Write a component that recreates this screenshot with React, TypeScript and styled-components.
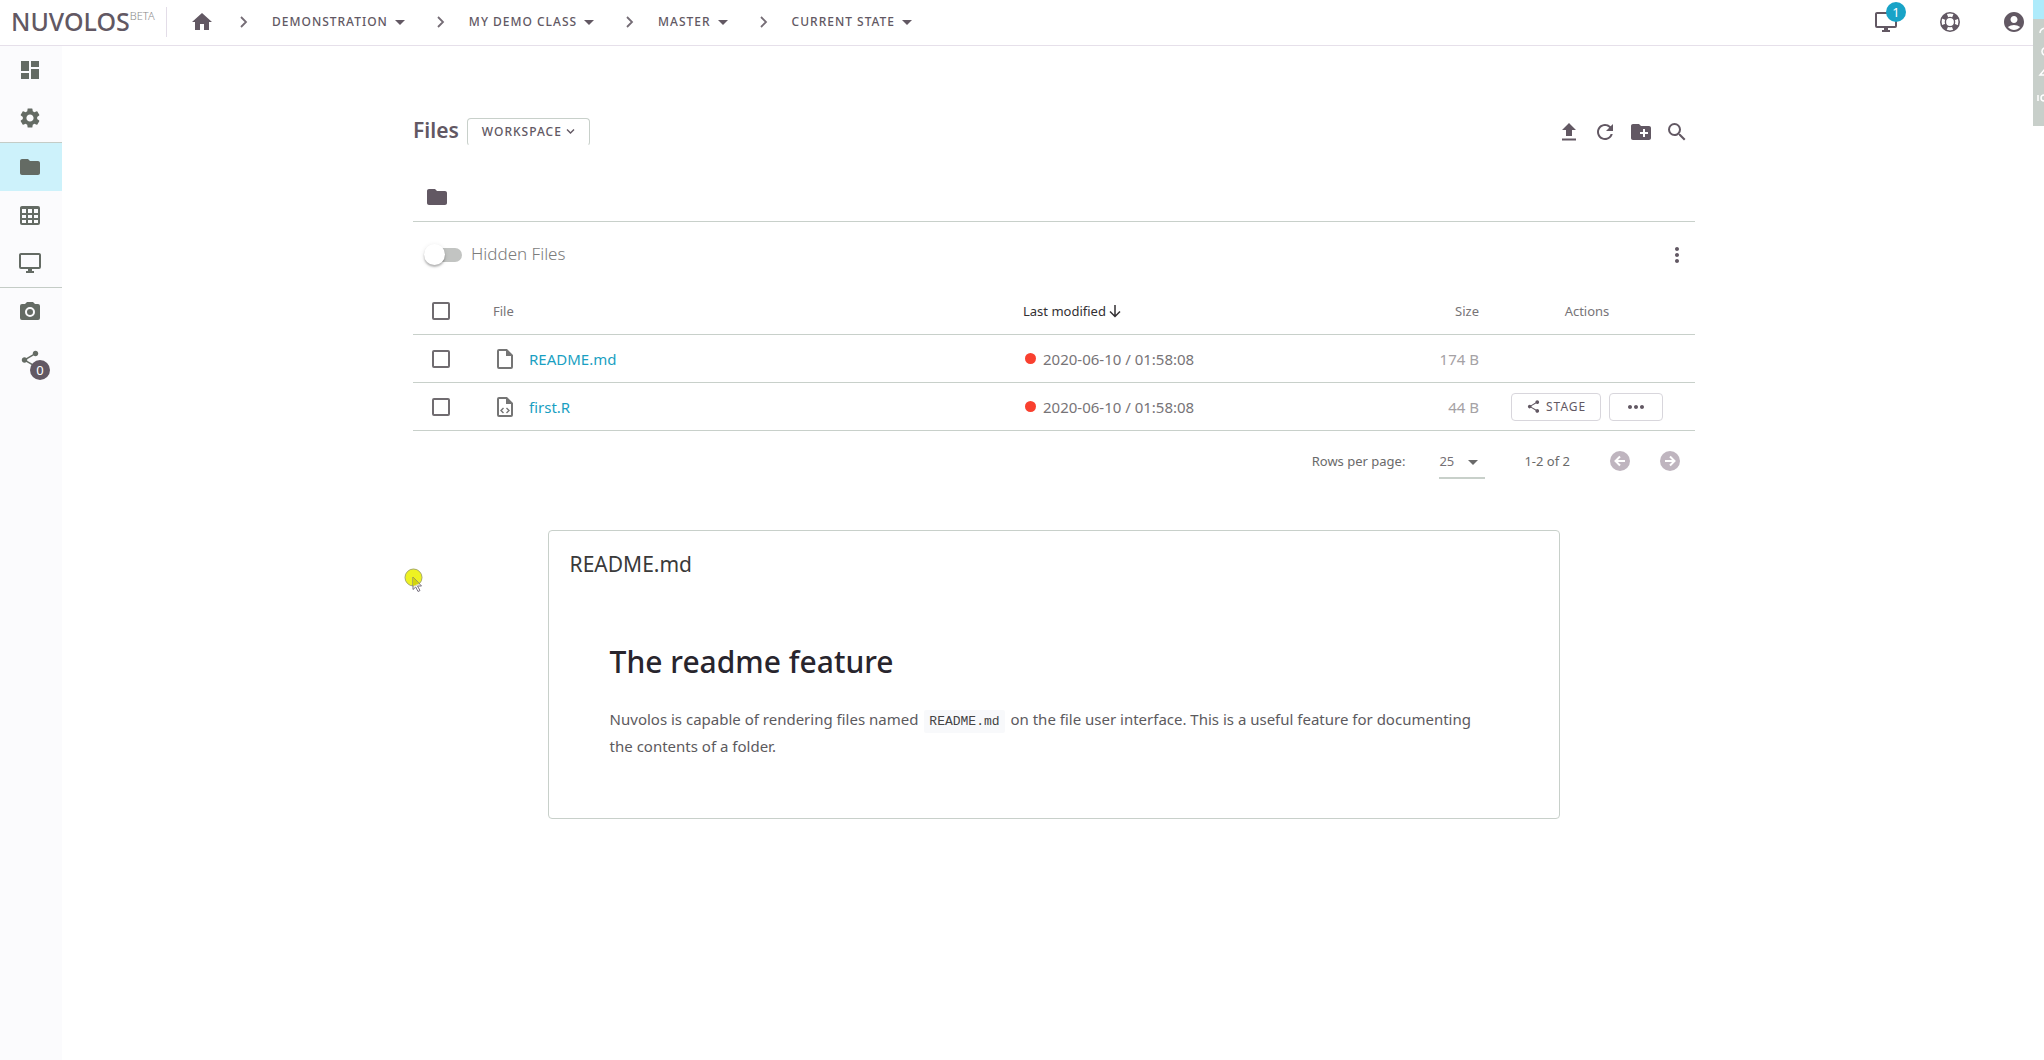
import React from "react";
import styled, { createGlobalStyle, css } from "styled-components";
import {
  MdAccountCircle,
  MdArrowDropDown,
  MdCreateNewFolder,
  MdDashboard,
  MdFolder,
  MdMoreHoriz,
  MdMoreVert,
  MdRefresh,
  MdSearch,
  MdSettings,
  MdShare,
} from "react-icons/md";

const ink = "#625863";
const side = "#646b64";
const line = "#c8d0ca";
const accent = "#1a9fc2";

const Global = createGlobalStyle`
  *, *::before, *::after { box-sizing: border-box; }
  body {
    margin: 0;
    background: #fff;
    color: #6a6a6a;
    font-family: "Noto Sans", "Open Sans", sans-serif;
    font-size: 15px;
  }
  button, select, input { font-family: inherit; margin: 0; }
  svg { display: block; flex: none; }
`;

const Page = styled.div`
  display: flex;
  flex-direction: column;
  min-height: 100vh;
  position: relative;
  overflow: hidden;
`;

const Header = styled.header`
  display: flex;
  align-items: center;
  height: 46px;
  padding: 0 18px 2px 11px;
  border-bottom: 1px solid #e6e0ea;
`;

const Logo = styled.a`
  display: flex;
  align-items: flex-start;
  width: 156px;
  height: 30px;
  color: ${ink};
  text-decoration: none;
  border-right: 1px solid #e3dde8;
`;

const LogoName = styled.span`
  font-size: 25px;
  line-height: 28px;
  font-weight: 500;
`;

const LogoTag = styled.span`
  margin-top: 1px;
  font-size: 11px;
  line-height: 16px;
  font-weight: 300;
  color: #8a8a8a;
`;

const Crumbs = styled.nav`
  display: flex;
  align-items: center;
  flex: 1;
  padding-left: 22px;
`;

const IconButton = styled.button<{ $size?: number; $color?: string }>`
  position: relative;
  display: flex;
  align-items: center;
  justify-content: center;
  width: ${(p) => p.$size ?? 36}px;
  height: ${(p) => p.$size ?? 36}px;
  padding: 0;
  border: 0;
  background: none;
  color: ${(p) => p.$color ?? ink};
`;

const Separator = styled.span`
  display: flex;
  justify-content: center;
  width: 24px;
  margin: 0 16px 0 17px;
  color: #746c75;
`;

const CrumbButton = styled.button`
  display: flex;
  align-items: center;
  height: 32px;
  padding: 0;
  border: 0;
  background: none;
  color: ${ink};
  font-size: 12px;
  font-weight: 500;
  letter-spacing: 1px;
`;

const HeaderActions = styled.div`
  display: flex;
  align-items: center;
  gap: 40px;
`;

const Badge = styled.span<{ $tone: string; $top: number; $left: number }>`
  position: absolute;
  top: ${(p) => p.$top}px;
  left: ${(p) => p.$left}px;
  width: 20px;
  height: 20px;
  border-radius: 50%;
  background: ${(p) => p.$tone};
  color: #fff;
  font-size: 13px;
  line-height: 20px;
  text-align: center;
`;

const Body = styled.div`
  display: flex;
  flex: 1;
`;

const Sidebar = styled.nav`
  display: flex;
  flex-direction: column;
  width: 62px;
  flex: none;
  background: #fbfbfd;
`;

const SideItem = styled.a<{ $active?: boolean; $ruled?: boolean }>`
  position: relative;
  display: flex;
  align-items: center;
  justify-content: center;
  height: ${(p) => (p.$ruled ? 49 : 48)}px;
  padding-right: 2px;
  color: ${side};
  ${(p) => p.$ruled && css`border-top: 1px solid #c4ccc6;`}
  ${(p) => p.$active && css`background: #cdf2fb;`}
`;

const Main = styled.main`
  flex: 1;
  min-width: 0;
  padding-left: 2px;
`;

const Content = styled.div`
  width: 100%;
  max-width: 1282px;
  margin: 0 auto;
  padding-top: 68px;
`;

const TitleBar = styled.div`
  display: flex;
  align-items: center;
  height: 36px;
`;

const Title = styled.h1`
  margin: 0 8px 4px 0;
  color: ${ink};
  font-size: 21px;
  line-height: 28px;
  font-weight: 600;
`;

const WorkspaceButton = styled.button`
  display: flex;
  align-items: center;
  gap: 4px;
  height: 28px;
  padding: 0 14px 2px;
  border: 1px solid ${line};
  border-bottom-color: transparent;
  border-radius: 4px;
  background: #fff;
  color: ${ink};
  font-size: 12px;
  font-weight: 500;
  letter-spacing: 1px;
`;

const Tools = styled.div`
  display: flex;
  margin-left: auto;
`;

const PathBar = styled.div`
  display: flex;
  align-items: center;
  height: 72px;
  padding: 22px 0 0 12px;
  border-bottom: 1px solid ${line};
  color: ${ink};
`;

const OptionsBar = styled.div`
  display: flex;
  align-items: center;
  justify-content: space-between;
  height: 65px;
  padding-left: 11px;
`;

const SwitchLabel = styled.label`
  display: flex;
  align-items: center;
  gap: 9px;
  padding-bottom: 2px;
  font-size: 17px;
  line-height: 24px;
  font-weight: 300;
  color: #7c7c7c;
`;

const Switch = styled.input`
  appearance: none;
  position: relative;
  top: 1px;
  width: 38px;
  height: 14px;
  border-radius: 7px;
  background: linear-gradient(90deg, transparent 10px, #c2c4c2 10px);
  &::before {
    content: "";
    position: absolute;
    top: -4px;
    left: 0;
    width: 21px;
    height: 21px;
    border-radius: 50%;
    background: #fff;
    box-shadow: 0 2px 2px rgba(0, 0, 0, 0.25), 0 1px 5px rgba(0, 0, 0, 0.1);
  }
`;

const Table = styled.table`
  width: 100%;
  table-layout: fixed;
  border-collapse: separate;
  border-spacing: 0;
`;

const Cell = styled.td<{ $align?: string; $tone?: string }>`
  height: 48px;
  padding: 0 16px;
  border-bottom: 1px solid ${line};
  text-align: ${(p) => p.$align ?? "left"};
  color: ${(p) => p.$tone ?? "#777477"};
  white-space: nowrap;
`;

const HeadCell = styled(Cell)`
  font-size: 13px;
  font-weight: 400;
`;

const CheckCell = styled(Cell)`
  padding: 0 19px;
`;

const ActionHead = styled(HeadCell)`
  padding-right: 32px;
`;

const Check = styled.input`
  appearance: none;
  display: block;
  width: 18px;
  height: 18px;
  border: 2px solid #706c70;
  border-radius: 2px;
`;

const FileLink = styled.a`
  display: flex;
  align-items: center;
  gap: 12px;
  color: ${accent};
  text-decoration: none;
  svg {
    color: #757575;
  }
`;

const Inline = styled.span<{ $gap: number }>`
  display: flex;
  align-items: center;
  gap: ${(p) => p.$gap}px;
`;

const Dot = styled.span`
  width: 11px;
  height: 11px;
  margin-left: 2px;
  border-radius: 50%;
  background: #f9402f;
`;

const OutlineButton = styled.button`
  display: flex;
  align-items: center;
  justify-content: center;
  gap: 5px;
  height: 28px;
  min-width: 51px;
  padding: 0 14px;
  border: 1px solid #d8d6dc;
  border-radius: 4px;
  background: #fff;
  color: ${ink};
  font-size: 12px;
  font-weight: 400;
  letter-spacing: 1px;
`;

const Pager = styled.div`
  display: flex;
  align-items: center;
  justify-content: flex-end;
  height: 60px;
  padding-right: 7px;
  font-size: 13px;
`;

const PageSize = styled.label`
  display: flex;
  align-items: center;
  gap: 34px;
`;

const SelectBox = styled.span`
  position: relative;
  display: flex;
  width: 46px;
  height: 36px;
  border-bottom: 2px solid ${line};
  svg {
    position: absolute;
    right: 0;
    top: 7px;
    pointer-events: none;
  }
`;

const Select = styled.select`
  appearance: none;
  width: 100%;
  padding: 2px 0 0;
  border: 0;
  background: none;
  color: #757075;
  font-size: 13px;
`;

const Range = styled.span`
  margin: 0 32px 0 39px;
`;

const Readme = styled.section`
  width: 79%;
  margin: 39px auto 0;
  padding: 19px 21px 58px;
  border: 1px solid ${line};
  border-radius: 4px;
`;

const ReadmeName = styled.h2`
  margin: 0;
  color: #3a3a3a;
  font-size: 21px;
  line-height: 28px;
  font-weight: 400;
`;

const ReadmeBody = styled.article`
  padding: 62px 60px 0 40px;
  color: #5c5a5e;
  line-height: 27px;
  h1 {
    margin: 0 0 22px;
    color: #28252d;
    font-size: 30px;
    line-height: 44px;
    font-weight: 500;
  }
  p {
    margin: 0;
  }
  code {
    margin: 0 2px;
    padding: 4px 5px;
    background: #f8f9fb;
    border-radius: 2px;
    color: #444;
    font-family: "Liberation Mono", monospace;
    font-size: 13px;
    line-height: 15px;
  }
`;

const Pointer = styled.svg`
  position: absolute;
  left: 403px;
  top: 566px;
`;

const EdgePanel = styled.aside`
  position: absolute;
  top: 0;
  right: 0;
  width: 11px;
  height: 126px;
  overflow: hidden;
  border-top: 19px solid #aeebfb;
  background: #c8cfca;
`;

type GlyphProps = { d: string; size?: number };
const Glyph = ({ d, size = 24 }: GlyphProps) => (
  <svg width={size} height={size} viewBox="0 0 24 24" fill="currentColor" aria-hidden="true">
    <path fillRule="evenodd" d={d} />
  </svg>
);

const paths = {
  home: "M10 20v-6h4v6h5v-8h3L12 3 2 12h3v8z",
  monitor:
    "M21 16H3V4h18m0-2H3c-1.1 0-2 .9-2 2v12a2 2 0 0 0 2 2h7v2H8v2h8v-2h-2v-2h7a2 2 0 0 0 2-2V4c0-1.1-.9-2-2-2z",
  table:
    "M4 3h16a2 2 0 0 1 2 2v15a2 2 0 0 1-2 2H4a2 2 0 0 1-2-2V5c0-1.100.9-2 2-2zM4 6v4h4V6zM10 6v4h4V6zM16 6v4h4V6zM4 12v3h4v-3zM10 12v3h4v-3zM16 12v3h4v-3zM4 17v3h4v-3zM10 17v3h4v-3zM16 17v3h4v-3z",
  camera:
    "M4 4h3l2-2h6l2 2h3a2 2 0 0 1 2 2v12a2 2 0 0 1-2 2H4a2 2 0 0 1-2-2V6a2 2 0 0 1 2-2m8 3a5 5 0 1 0 0 10 5 5 0 0 0 0-10m0 2a3 3 0 1 1 0 6 3 3 0 0 1 0-6z",
  upload: "M9 16h6v-6h4l-7-7-7 7h4zM5 18.500h14v2H5z",
  file: "M14 2H6a2 2 0 0 0-2 2v16a2 2 0 0 0 2 2h12a2 2 0 0 0 2-2V8zM18 20H6V4h7v5h5z",
};

const Chevron = () => (
  <svg width="12" height="14" viewBox="0 0 12 14" fill="none" stroke="currentColor" strokeWidth="1.800">
    <path d="M3 2l5 5-5 5" />
  </svg>
);

const Lifebuoy = () => (
  <svg width="22" height="22" viewBox="0 0 22 22" fill="none" stroke="currentColor">
    <circle cx="11" cy="11" r="9.2" strokeWidth="1.600" />
    <circle cx="11" cy="11" r="4.600" strokeWidth="1.400" />
    <circle cx="11" cy="11" r="7" strokeWidth="4.400" strokeDasharray="5.500 5.496" strokeDashoffset="-2.750" />
  </svg>
);

const CodeFile = () => (
  <svg width="24" height="24" viewBox="0 0 24 24" fill="currentColor" aria-hidden="true">
    <path fillRule="evenodd" d={paths.file} />
    <path d="M10.500 13L8 15.500l2.500 2.500M13.500 13l2.500 2.500-2.500 2.500" fill="none" stroke="currentColor" strokeWidth="1.400" />
  </svg>
);

const CircleArrow = ({ back }: { back?: boolean }) => (
  <svg width="20" height="20" viewBox="0 0 20 20" fill="none">
    <circle cx="10" cy="10" r="10" fill="#bfb5bf" />
    <path
      d={back ? "M15 10H6M10 5.500L5.500 10l4.500 4.500" : "M5 10h9M10 5.500l4.500 4.500-4.500 4.500"}
      stroke="#fff"
      strokeWidth="2"
    />
  </svg>
);

const crumbs = ["DEMONSTRATION", "MY DEMO CLASS", "MASTER", "CURRENT STATE"];

const files = [
  { name: "README.md", modified: "2020-06-10 / 01:58:08", size: "174 B", code: false },
  { name: "first.R", modified: "2020-06-10 / 01:58:08", size: "44 B", code: true },
];

export default function App() {
  return (
    <Page>
      <Global />
      <Header>
        <Logo href="#">
          <LogoName>NUVOLOS</LogoName>
          <LogoTag>BETA</LogoTag>
        </Logo>
        <Crumbs aria-label="Breadcrumb">
          <IconButton $size={26} aria-label="Home">
            <Glyph d={paths.home} size={24} />
          </IconButton>
          {crumbs.map((name) => (
            <React.Fragment key={name}>
              <Separator>
                <Chevron />
              </Separator>
              <CrumbButton>
                {name}
                <MdArrowDropDown size={24} />
              </CrumbButton>
            </React.Fragment>
          ))}
        </Crumbs>
        <HeaderActions>
          <IconButton $size={24} aria-label="Running applications">
            <Glyph d={paths.monitor} />
            <Badge $tone="#18a3c7" $top={-8} $left={12}>1</Badge>
          </IconButton>
          <IconButton $size={24} aria-label="Help">
            <Lifebuoy />
          </IconButton>
          <IconButton $size={24} aria-label="Account">
            <MdAccountCircle size={24} />
          </IconButton>
        </HeaderActions>
      </Header>
      <Body>
        <Sidebar aria-label="Sections">
          <SideItem href="#" aria-label="Dashboard"><MdDashboard size={24} /></SideItem>
          <SideItem href="#" aria-label="Settings"><MdSettings size={24} /></SideItem>
          <SideItem href="#" aria-label="Files" $active $ruled><MdFolder size={24} /></SideItem>
          <SideItem href="#" aria-label="Tables"><Glyph d={paths.table} /></SideItem>
          <SideItem href="#" aria-label="Applications"><Glyph d={paths.monitor} /></SideItem>
          <SideItem href="#" aria-label="Snapshots" $ruled><Glyph d={paths.camera} /></SideItem>
          <SideItem href="#" aria-label="Staging">
            <MdShare size={22} />
            <Badge $tone={ink} $top={24} $left={30}>0</Badge>
          </SideItem>
        </Sidebar>
        <Main>
          <Content>
            <TitleBar>
              <Title>Files</Title>
              <WorkspaceButton>
                WORKSPACE
                <svg width="9" height="9" viewBox="0 0 9 9" fill="none" stroke="currentColor" strokeWidth="1.400">
                  <path d="M1 2.500L4.500 6 8 2.500" />
                </svg>
              </WorkspaceButton>
              <Tools>
                <IconButton aria-label="Upload"><Glyph d={paths.upload} size={24} /></IconButton>
                <IconButton aria-label="Refresh"><MdRefresh size={24} /></IconButton>
                <IconButton aria-label="New folder"><MdCreateNewFolder size={24} /></IconButton>
                <IconButton aria-label="Search"><MdSearch size={24} /></IconButton>
              </Tools>
            </TitleBar>
            <PathBar>
              <MdFolder size={24} />
            </PathBar>
            <OptionsBar>
              <SwitchLabel>
                <Switch type="checkbox" role="switch" />
                Hidden Files
              </SwitchLabel>
              <IconButton aria-label="More options"><MdMoreVert size={24} /></IconButton>
            </OptionsBar>
            <Table>
              <colgroup>
                <col style={{ width: 64 }} />
                <col />
                <col style={{ width: 288 }} />
                <col style={{ width: 200 }} />
                <col style={{ width: 200 }} />
              </colgroup>
              <thead>
                <tr>
                  <CheckCell as="th"><Check type="checkbox" aria-label="Select all" /></CheckCell>
                  <HeadCell as="th">File</HeadCell>
                  <HeadCell as="th" $tone="#333033">
                    <Inline $gap={2}>
                      Last modified
                      <svg width="14" height="14" viewBox="0 0 14 14" fill="none" stroke="currentColor" strokeWidth="1.500">
                        <path d="M7 1v11M2 7.500l5 5 5-5" />
                      </svg>
                    </Inline>
                  </HeadCell>
                  <HeadCell as="th" $align="right">Size</HeadCell>
                  <ActionHead as="th" $align="center">Actions</ActionHead>
                </tr>
              </thead>
              <tbody>
                {files.map((f) => (
                  <tr key={f.name}>
                    <CheckCell><Check type="checkbox" aria-label={`Select ${f.name}`} /></CheckCell>
                    <Cell>
                      <FileLink href="#">
                        {f.code ? <CodeFile /> : <Glyph d={paths.file} />}
                        {f.name}
                      </FileLink>
                    </Cell>
                    <Cell>
                      <Inline $gap={7}>
                        <Dot />
                        {f.modified}
                      </Inline>
                    </Cell>
                    <Cell $align="right" $tone="#a5a2a5">{f.size}</Cell>
                    <Cell>
                      {f.code && (
                        <Inline $gap={8}>
                          <OutlineButton>
                            <MdShare size={15} />
                            STAGE
                          </OutlineButton>
                          <OutlineButton aria-label="More actions">
                            <MdMoreHoriz size={24} />
                          </OutlineButton>
                        </Inline>
                      )}
                    </Cell>
                  </tr>
                ))}
              </tbody>
            </Table>
            <Pager>
              <PageSize>
                Rows per page:
                <SelectBox>
                  <Select defaultValue="25">
                    <option>25</option>
                    <option>50</option>
                  </Select>
                  <MdArrowDropDown size={24} />
                </SelectBox>
              </PageSize>
              <Range>1-2 of 2</Range>
              <Inline $gap={14}>
                <IconButton aria-label="Previous page"><CircleArrow back /></IconButton>
                <IconButton aria-label="Next page"><CircleArrow /></IconButton>
              </Inline>
            </Pager>
            <Readme>
              <ReadmeName>README.md</ReadmeName>
              <ReadmeBody>
                <h1>The readme feature</h1>
                <p>
                  Nuvolos is capable of rendering files named <code>README.md</code> on the file user interface. This is
                  a useful feature for documenting the contents of a folder.
                </p>
              </ReadmeBody>
            </Readme>
          </Content>
        </Main>
      </Body>
      <Pointer width="22" height="28" viewBox="0 0 22 28" aria-hidden="true">
        <circle cx="10.500" cy="11.500" r="8.500" fill="#eef222" stroke="#a5a86a" />
        <path d="M10 11l8.500 9h-4l2.500 4.500-2 1-2.300-4.500-2.700 2.500z" fill="#fff" fillOpacity="0.500" stroke="#77707f" />
        <path d="M10 11v9l6-2.500z" fill="#d3d40c" />
      </Pointer>
      <EdgePanel aria-hidden="true">
        <svg width="11" height="107" viewBox="0 0 11 107" fill="none" stroke="#fff" strokeWidth="1.500">
          <path d="M7 14q0-4 5-5M11 29a4 4 0 0 0 0 7M7 56l5-6v6z" />
          <path d="M5 76v6M11 76a3 3 0 0 0 0 6" />
        </svg>
      </EdgePanel>
    </Page>
  );
}
